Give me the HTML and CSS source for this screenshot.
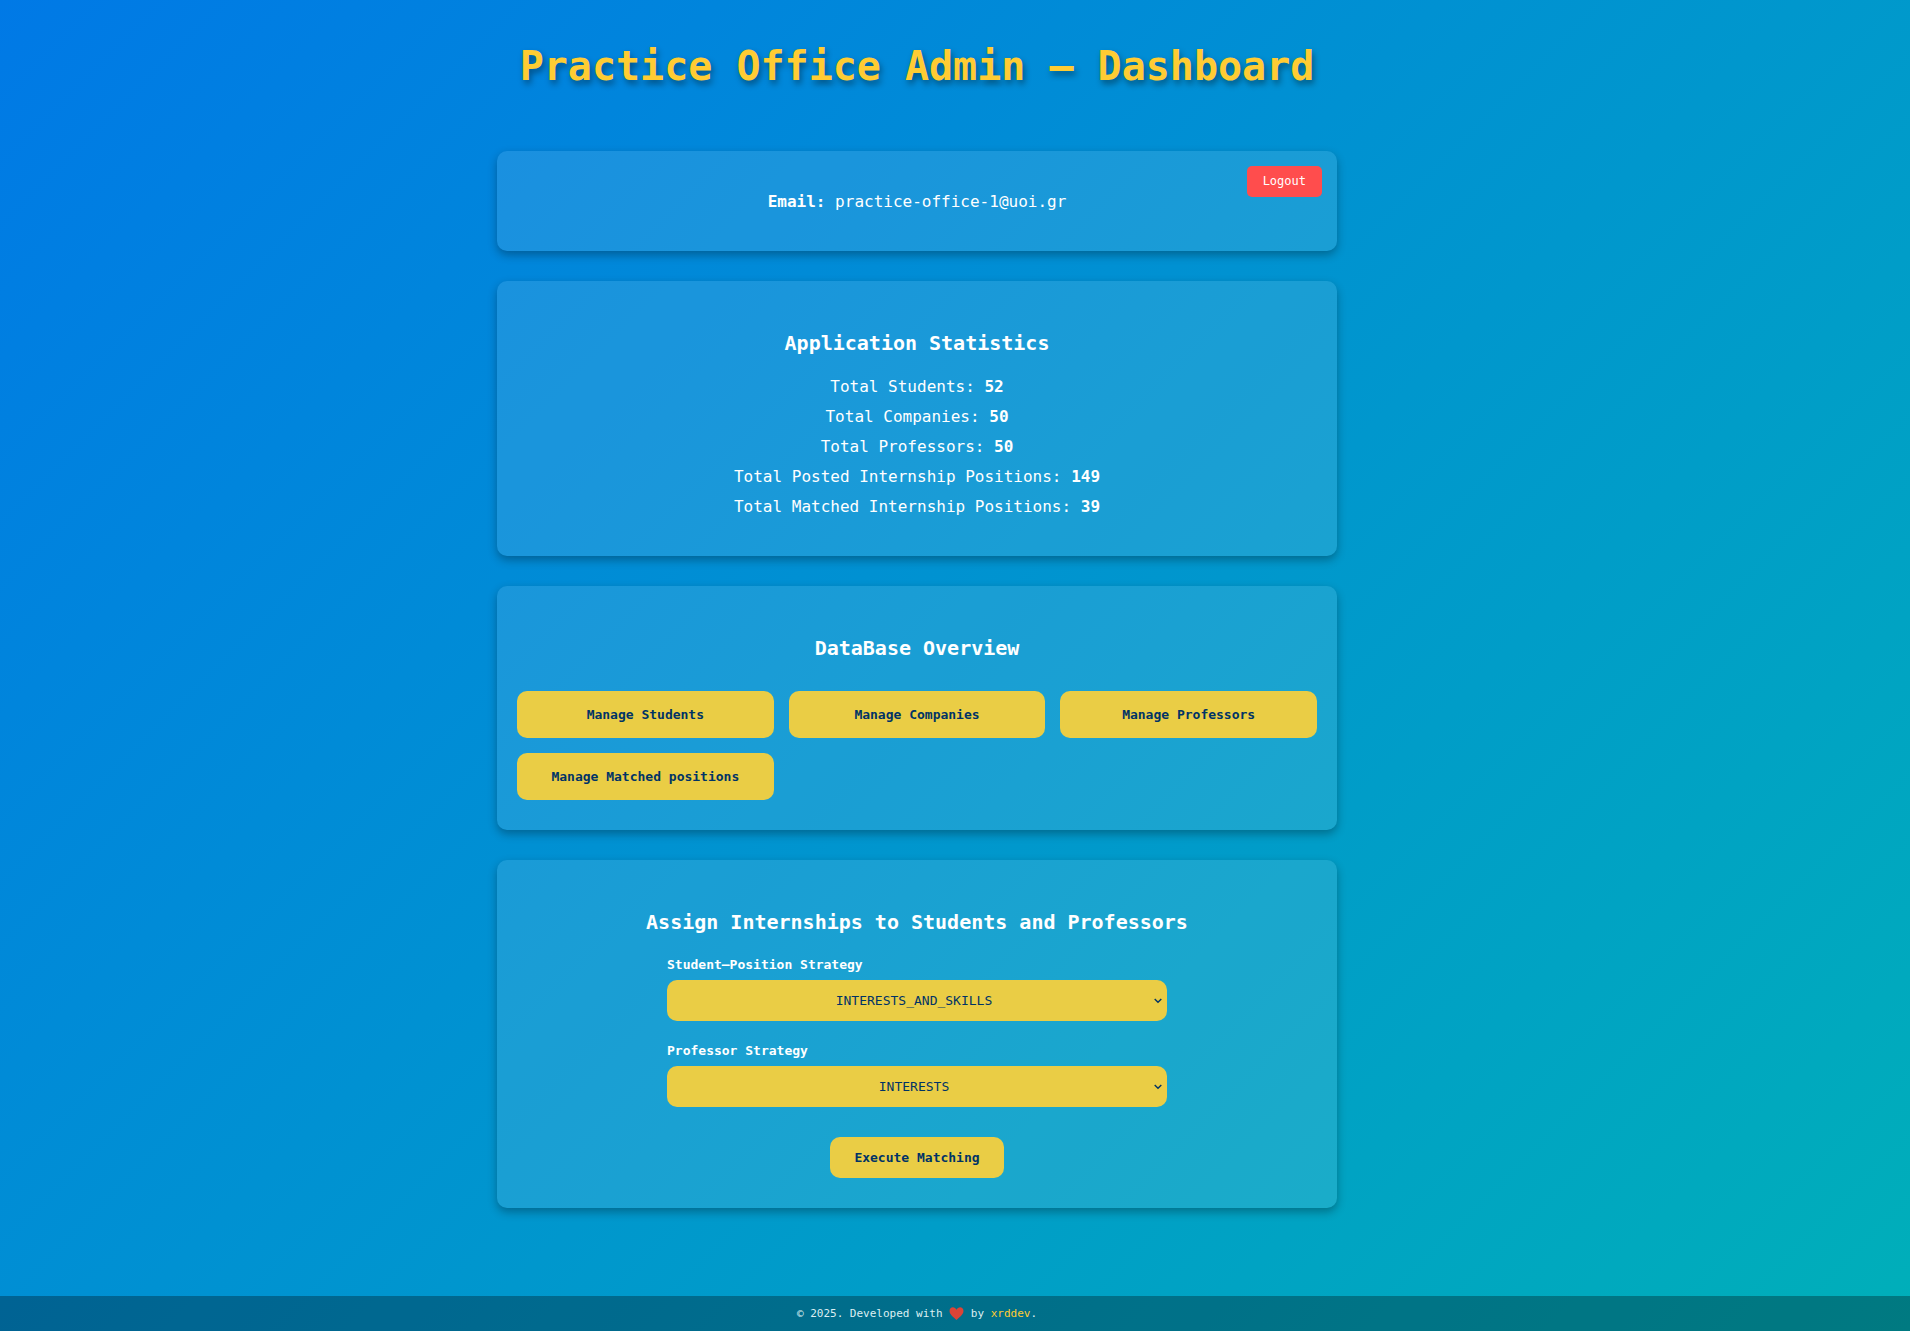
FILE: index.html
```html
<!DOCTYPE html>
<html lang="en">
<head>
<meta charset="utf-8">
<title>Practice Office Admin – Dashboard</title>
<link rel="stylesheet" href="styles.css">
</head>
<body>
<main class="dashboard">
  <h1 class="title">Practice Office Admin – Dashboard</h1>

  <section class="card account">
    <p class="line"><strong>Email:</strong> practice-office-1@uoi.gr</p>
    <button type="button" class="logout">Logout</button>
  </section>

  <section class="card">
    <h2 class="heading">Application Statistics</h2>
    <div class="stats">
      <p class="line">Total Students: <strong>52</strong></p>
      <p class="line">Total Companies: <strong>50</strong></p>
      <p class="line">Total Professors: <strong>50</strong></p>
      <p class="line">Total Posted Internship Positions: <strong>149</strong></p>
      <p class="line">Total Matched Internship Positions: <strong>39</strong></p>
    </div>
  </section>

  <section class="card">
    <h2 class="heading">DataBase Overview</h2>
    <div class="actions">
      <button type="button" class="button tile">Manage Students</button>
      <button type="button" class="button tile">Manage Companies</button>
      <button type="button" class="button tile">Manage Professors</button>
      <button type="button" class="button tile">Manage Matched positions</button>
    </div>
  </section>

  <section class="card">
    <h2 class="heading">Assign Internships to Students and Professors</h2>
    <form class="matching">
      <div class="field">
        <label class="label" for="student-strategy">Student–Position Strategy</label>
        <select class="select" id="student-strategy"><option>INTERESTS_AND_SKILLS</option></select>
      </div>
      <div class="field">
        <label class="label" for="professor-strategy">Professor Strategy</label>
        <select class="select" id="professor-strategy"><option>INTERESTS</option></select>
      </div>
      <button type="button" class="button execute">Execute Matching</button>
    </form>
  </section>
</main>
<footer class="footer">
  <p class="credit">© 2025. Developed with
    <svg class="heart" viewBox="0 0 16 14" role="img" aria-label="love"><path d="M8 14C6 11.500 .5 8.500 .5 4.200C.5 -.6 6.400 -.9 8 3C9.600 -.9 15.500 -.6 15.500 4.200C15.500 8.500 10 11.500 8 14Z" fill="#db4437"/></svg>
    by <a class="author" href="#">xrddev</a>.</p>
</footer>
</body>
</html>
```
FILE: styles.css
```css
* {
  box-sizing: border-box;
}

body {
  margin: 0;
  min-height: 100vh;
  display: flex;
  flex-direction: column;
  justify-content: space-between;
  background: linear-gradient(135deg, #0079e6, #00afb9);
  color: #fff;
  font-family: "DejaVu Sans Mono", "Liberation Mono", monospace;
  font-size: 16px;
}

.dashboard {
  display: flex;
  flex-direction: column;
  align-items: center;
  gap: 30px;
  padding: 36px 76px 60px 0;
}

.title {
  margin: 0 0 25px;
  color: #ffcc33;
  font-size: 40px;
  line-height: 60px;
  text-shadow: 2px 4px 6px rgba(0, 0, 0, 0.4);
}

.card {
  position: relative;
  width: 100%;
  max-width: 840px;
  padding: 47px 20px 30px;
  border-radius: 10px;
  background: rgba(255, 255, 255, 0.1);
  box-shadow: 0 4px 10px rgba(0, 0, 0, 0.3);
  text-align: center;
}

.account {
  padding: 36px 20px 34px;
}

.heading {
  margin: 0 0 14px;
  font-size: 20px;
  line-height: 30px;
}

.line {
  margin: 0;
  line-height: 30px;
}

.stats {
  padding-bottom: 4px;
}

.logout {
  position: absolute;
  top: 15px;
  right: 15px;
  padding: 8px 16px;
  border: 0;
  border-radius: 5px;
  background: #ff4d4d;
  color: #fff;
  font: 12px/15px "DejaVu Sans Mono", monospace;
}

.actions {
  display: grid;
  grid-template-columns: repeat(3, 1fr);
  gap: 15px;
  padding-top: 14px;
}

.button,
.select {
  border: 0;
  border-radius: 10px;
  background: #eacd45;
  color: #003366;
  font: 13px/17px "DejaVu Sans Mono", monospace;
}

.button {
  padding: 12px 24px;
  font-weight: bold;
}

.tile {
  padding: 15px 10px;
}

.matching {
  display: flex;
  flex-direction: column;
  align-items: center;
  gap: 20px;
  padding-top: 4px;
}

.field {
  display: flex;
  flex-direction: column;
  gap: 5px;
  width: 100%;
  max-width: 500px;
  text-align: left;
}

.label {
  font-size: 13px;
  font-weight: bold;
  line-height: 20px;
}

.select {
  appearance: none;
  width: 100%;
  height: 41px;
  padding: 0 6px 0 0;
  background-image: url("data:image/svg+xml,%3Csvg xmlns='http://www.w3.org/2000/svg' width='8' height='6'%3E%3Cpath d='M.7 1L4 4.300L7.300 1' fill='none' stroke='%23003366' stroke-width='1.400'/%3E%3C/svg%3E");
  background-repeat: no-repeat;
  background-position: right 5px center;
  text-align: center;
  text-align-last: center;
}

.execute {
  margin-top: 10px;
}

.footer {
  padding: 10px 76px 10px 0;
  background: rgba(0, 0, 0, 0.3);
  text-align: center;
}

.credit {
  margin: 0;
  color: #dceef2;
  font-size: 11px;
  line-height: 15px;
}

.heart {
  width: 15px;
  height: 13px;
  vertical-align: -3px;
}

.author {
  color: #ffcc33;
  text-decoration: none;
}
```
